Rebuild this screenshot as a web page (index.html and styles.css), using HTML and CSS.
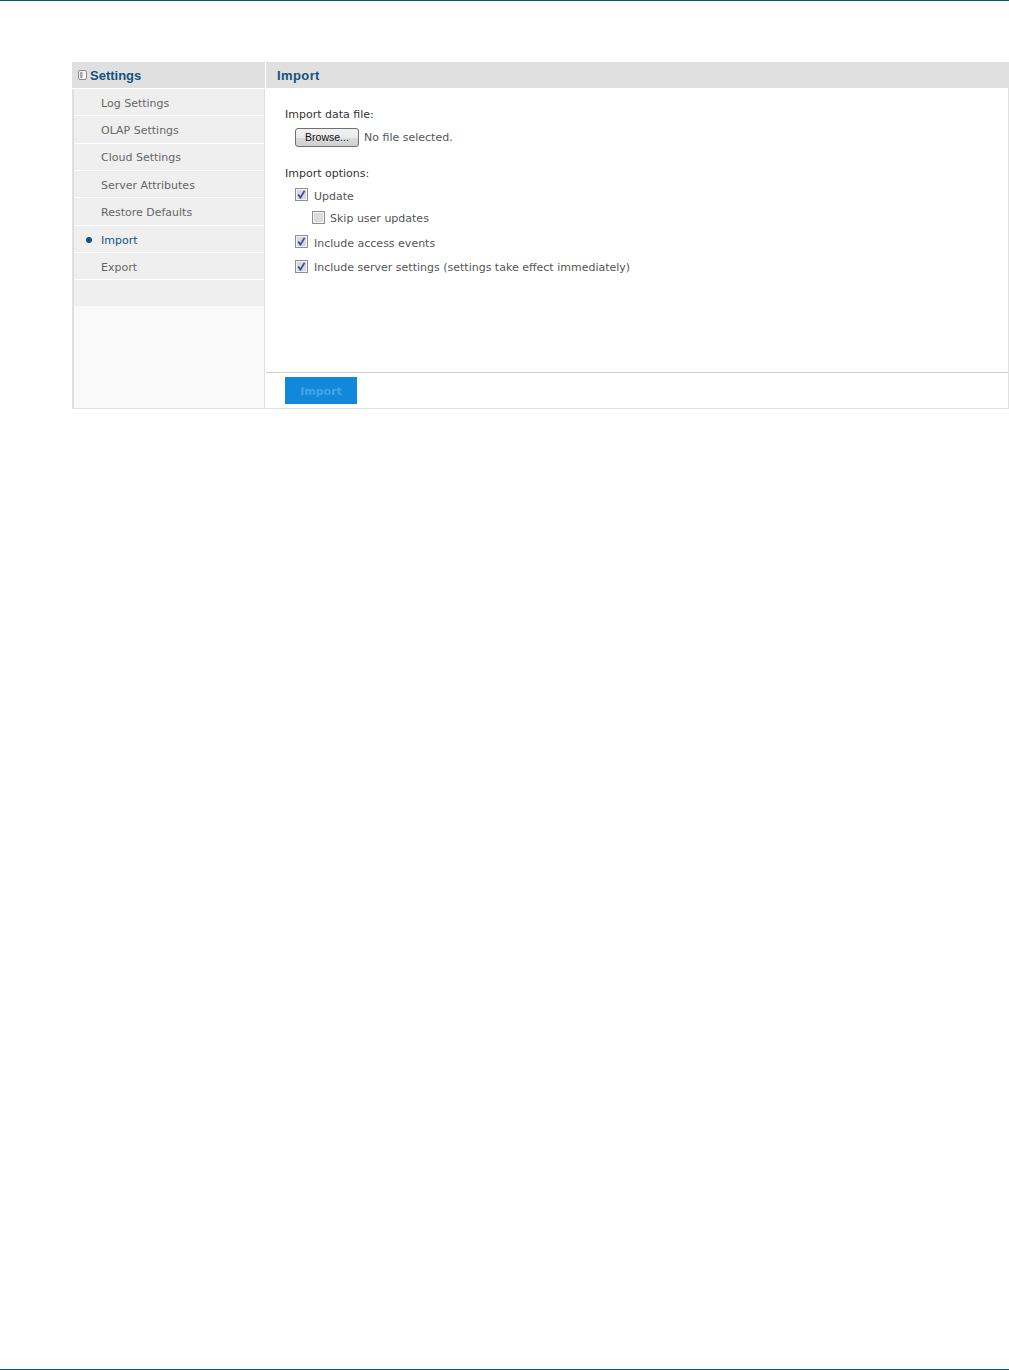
FILE: index.html
```html
<!DOCTYPE html>
<html lang="en">
<head>
<meta charset="utf-8">
<title>Settings - Import</title>
<link rel="stylesheet" href="styles.css">
</head>
<body>
<div class="page">
  <div class="panel">
    <aside class="side">
      <div class="side-head">
        <svg class="side-icon" width="9" height="10" viewBox="0 0 9 10"><rect x="0.5" y="0.5" width="8" height="9" rx="1.5" fill="#f4f4f4" stroke="#8a8a8a"/><rect x="2" y="2" width="2.5" height="6" fill="#a8a8a8"/></svg>
        <span>Settings</span>
      </div>
      <nav class="side-nav">
        <a class="nav-item">Log Settings</a>
        <a class="nav-item">OLAP Settings</a>
        <a class="nav-item nav-cloud">Cloud Settings</a>
        <a class="nav-item">Server Attributes</a>
        <a class="nav-item">Restore Defaults</a>
        <a class="nav-item active">Import</a>
        <a class="nav-item">Export</a>
        <div class="nav-blank"></div>
      </nav>
    </aside>
    <main class="main">
      <div class="main-head">Import</div>
      <div class="main-body">
        <div class="label first">Import data file:</div>
        <div class="file-row">
          <button class="browse" type="button">Browse...</button>
          <span class="file-name">No file selected.</span>
        </div>
        <div class="label second">Import options:</div>
        <div class="opt opt-update">
          <svg class="cb" width="13" height="13" viewBox="0 0 13 13"><use href="#checked"/></svg>
          <span>Update</span>
        </div>
        <div class="opt opt-skip">
          <svg class="cb" width="13" height="13" viewBox="0 0 13 13"><rect x="0.5" y="0.5" width="12" height="12" fill="#e9e9e9" stroke="#8e8f8f"/><rect x="1.5" y="1.5" width="10" height="10" fill="#dcdcdc" stroke="#f4f4f4"/></svg>
          <span>Skip user updates</span>
        </div>
        <div class="opt opt-access">
          <svg class="cb" width="13" height="13" viewBox="0 0 13 13"><use href="#checked"/></svg>
          <span>Include access events</span>
        </div>
        <div class="opt opt-server">
          <svg class="cb" width="13" height="13" viewBox="0 0 13 13"><use href="#checked"/></svg>
          <span>Include server settings (settings take effect immediately)</span>
        </div>
      </div>
      <div class="main-foot">
        <button class="import-btn" type="button">Import</button>
      </div>
    </main>
  </div>
</div>
<svg class="defs" width="0" height="0">
  <defs>
    <g id="checked">
      <rect x="0.5" y="0.5" width="12" height="12" fill="#e9e9e9" stroke="#8e8f8f"/>
      <rect x="1.5" y="1.5" width="10" height="10" fill="#d6d8e4" stroke="#f4f4f4"/>
      <path d="M3.2 6.4 L5.4 9.6 L9.6 2.8" fill="none" stroke="#3d4f9c" stroke-width="1.7"/>
    </g>
  </defs>
</svg>
</body>
</html>
```
FILE: styles.css
```css
html, body {
  margin: 0;
  padding: 0;
  background: #fff;
}
body {
  font-family: "DejaVu Sans", Verdana, sans-serif;
  font-size: 11px;
  color: #555;
}
.page {
  box-sizing: border-box;
  height: 1370px;
  border-top: 1px solid #005a87;
  border-bottom: 1px solid #005a87;
  padding: 61px 0 0 72px;
}
.panel {
  display: flex;
  height: 347px;
  box-sizing: border-box;
  border-left: 2px solid #e0e0e0;
  border-right: 1px solid #e0e0e0;
  border-bottom: 1px solid #e0e0e0;
}
.side {
  width: 190px;
  flex: none;
  background: #f9f9f9;
  border-right: 1px solid #e0e0e0;
}
.side-head {
  height: 26px;
  margin-left: -2px;
  margin-right: -1px;
  background: #e0e0e0;
  display: flex;
  align-items: center;
  padding-left: 6px;
  gap: 3px;
  border-bottom: 1px solid #fff;
  font-family: "Liberation Sans", Arial, sans-serif;
  font-weight: bold;
  font-size: 13px;
  color: #14527f;
}
.side-nav {
  display: flex;
  flex-direction: column;
}
.nav-item {
  display: flex;
  align-items: center;
  box-sizing: border-box;
  height: 27.33px;
  padding: 3px 0 0 27px;
  background: #efefef;
  border-bottom: 1px solid #fff;
  color: #666;
  position: relative;
}
.nav-cloud {
  padding-top: 1px;
}
.nav-item.active {
  color: #14527f;
}
.nav-item.active::before {
  content: "";
  position: absolute;
  left: 12px;
  top: 11px;
  width: 6px;
  height: 6px;
  border-radius: 50%;
  background: #14527f;
}
.nav-blank {
  height: 26px;
  background: #efefef;
}
.main {
  flex: 1;
  display: flex;
  flex-direction: column;
  margin-left: 1px;
}
.main-head {
  height: 26px;
  background: #e0e0e0;
  margin-right: -1px;
  display: flex;
  align-items: center;
  padding-left: 11px;
  font-family: "Liberation Sans", Arial, sans-serif;
  font-weight: bold;
  font-size: 13px;
  letter-spacing: 0.4px;
  color: #14527f;
}
.main-body {
  flex: 1;
  padding-left: 19px;
}
.label {
  color: #333;
  line-height: 13px;
}
.first {
  margin-top: 20px;
}
.file-row {
  display: flex;
  align-items: center;
  gap: 5px;
  margin: 7px 0 0 10px;
  height: 19px;
}
.file-name {
  margin-top: -1px;
}
.browse {
  width: 64px;
  height: 19px;
  padding: 0 0 2px;
  border: 1px solid #707070;
  border-radius: 3px;
  background: linear-gradient(#f2f2f2, #ebebeb 50%, #dcdcdc 50%, #cfcfcf);
  font-family: "Liberation Sans", Arial, sans-serif;
  font-size: 10.5px;
  color: #111;
}
.second {
  margin-top: 20px;
}
.opt {
  display: flex;
  align-items: center;
  gap: 6px;
  height: 14px;
  line-height: 14px;
  margin-left: 10px;
}
.opt span {
  position: relative;
  top: 1px;
}
.cb {
  margin-top: -4px;
}
.opt-skip .cb,
.opt-server .cb {
  margin-top: -2px;
}
.opt-update { margin-top: 9px; }
.opt-skip { margin-top: 8px; margin-left: 27px; gap: 5px; }
.opt-access { margin-top: 11px; }
.opt-server { margin-top: 10px; }
.main-foot {
  height: 36px;
  box-sizing: border-box;
  border-top: 1px solid #d0d0d0;
  padding: 4px 0 0 19px;
}
.import-btn {
  display: block;
  width: 72px;
  height: 27px;
  padding: 1px 0 0;
  border: 0;
  background: #1288db;
  color: #42a6ea;
  font-family: "DejaVu Sans", Verdana, sans-serif;
  font-weight: bold;
  font-size: 11px;
}
.defs {
  display: block;
  height: 0;
}
```
